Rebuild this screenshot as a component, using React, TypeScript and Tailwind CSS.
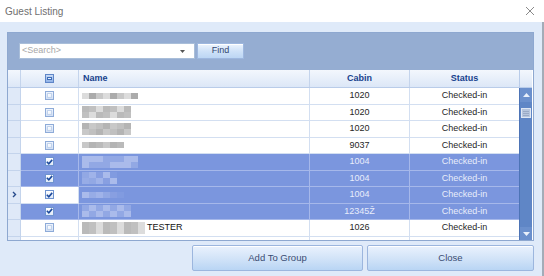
import React from "react";

function cn(...parts: Array<string | false | null | undefined>) {
  return parts.filter(Boolean).join(" ");
}

const GRAY = ["bg-[#d2d2d2]", "bg-[#c0c0c0]", "bg-[#b4b4b4]", "bg-[#dcdcdc]", "bg-[#ababab]", "bg-[#c8c8c8]", "bg-[#bababa]"];
const BLUE = ["bg-[#92a8e4]", "bg-[#a0b3e9]", "bg-[#889fe1]", "bg-[#aabbeb]", "bg-[#819be0]", "bg-[#97ace6]"];

type Row = {
  cabin: string;
  checked: boolean;
  selected: boolean;
  current?: boolean;
  cols: number;
  lines: number;
  seed: number;
  suffix?: string;
};

const rows: Row[] = [
  { cabin: "1020", checked: false, selected: false, cols: 8, lines: 1, seed: 1 },
  { cabin: "1020", checked: false, selected: false, cols: 7, lines: 2, seed: 2 },
  { cabin: "1020", checked: false, selected: false, cols: 7, lines: 2, seed: 3 },
  { cabin: "9037", checked: false, selected: false, cols: 6, lines: 1, seed: 4 },
  { cabin: "1004", checked: true, selected: true, cols: 8, lines: 2, seed: 5 },
  { cabin: "1004", checked: true, selected: true, cols: 5, lines: 2, seed: 6 },
  { cabin: "1004", checked: true, selected: true, current: true, cols: 6, lines: 1, seed: 7 },
  { cabin: "12345Ž", checked: true, selected: true, cols: 7, lines: 2, seed: 8 },
  { cabin: "1026", checked: false, selected: false, cols: 9, lines: 2, seed: 9, suffix: "TESTER" },
];

function Mosaic({ cols, lines, seed, blue }: { cols: number; lines: number; seed: number; blue: boolean }) {
  const pal = blue ? BLUE : GRAY;
  const cells: string[] = [];
  for (let i = 0; i < cols * lines; i++) {
    cells.push(pal[(i * 7 + seed * 3 + (i % 3) * seed) % pal.length]);
  }
  return (
    <div className="flex flex-col">
      {Array.from({ length: lines }).map((_, r) => (
        <div key={r} className="flex">
          {Array.from({ length: cols }).map((__, c) => (
            <div key={c} className={cn("w-[7px] h-[6px]", cells[r * cols + c])} />
          ))}
        </div>
      ))}
    </div>
  );
}

function CheckBox({ checked, header }: { checked?: boolean; header?: boolean }) {
  if (header) {
    return (
      <div className="w-[9px] h-[9px] border border-[#5f86c8] bg-gradient-to-b from-[#c9dbf6] to-[#8fb1e6] flex items-center justify-center">
        <div className="w-[5px] h-[3px] border border-[#3d6cb8] bg-[#e8f0fc]" />
      </div>
    );
  }
  if (checked) {
    return (
      <div className="w-[9px] h-[9px] border border-[#6f93cf] bg-gradient-to-b from-[#ffffff] to-[#dfe9f8] flex items-center justify-center">
        <svg width="7" height="6" viewBox="0 0 7 6">
          <path d="M0.8 2.8 L2.8 4.8 L6.2 0.9" fill="none" stroke="#1d4a9c" strokeWidth="1.6" />
        </svg>
      </div>
    );
  }
  return (
    <div className="w-[9px] h-[9px] border border-[#8eabd8] bg-gradient-to-b from-[#eef4fd] to-[#d3e0f4] flex items-center justify-center">
      <div className="w-[5px] h-[5px] bg-gradient-to-br from-[#ffffff] to-[#e6eef9] border border-[#c2d3ec]" />
    </div>
  );
}

function GridRow({ r }: { r: Row }) {
  const sel = r.selected;
  const line = sel ? "border-[#a6b8ea]" : "border-[#d3dff1]";
  const txt = sel ? "text-[#e8edfb]" : "text-[#262626]";
  return (
    <div className="flex h-[16.5px]">
      <div className="w-[13px] shrink-0 bg-[#dfe9f8] border-r border-b border-[#c4d4ec] flex items-center justify-center">
        {r.current ? (
          <svg width="5" height="7" viewBox="0 0 5 7">
            <path d="M1 1 L3.5 3.5 L1 6" fill="none" stroke="#274b8c" strokeWidth="1.4" />
          </svg>
        ) : null}
      </div>
      <div
        className={cn(
          "w-[58px] shrink-0 border-r border-b flex items-center justify-center",
          sel && !r.current ? "bg-[#7b96de]" : "bg-white",
          sel && !r.current ? line : "border-[#d3dff1]"
        )}
      >
        <CheckBox checked={r.checked} />
      </div>
      <div className={cn("w-[231px] shrink-0 border-r border-b flex items-center pl-[3px] gap-[2px]", sel ? "bg-[#7b96de]" : "bg-white", line)}>
        <Mosaic cols={r.cols} lines={r.lines} seed={r.seed} blue={sel} />
        {r.suffix ? <span className="text-[9px] text-[#111]">{r.suffix}</span> : null}
      </div>
      <div className={cn("w-[100px] shrink-0 border-r border-b flex items-center justify-center text-[9px]", sel ? "bg-[#7b96de]" : "bg-white", line, txt)}>
        {r.cabin}
      </div>
      <div className={cn("w-[109px] shrink-0 border-b flex items-center justify-center text-[9px]", sel ? "bg-[#7b96de]" : "bg-white", line, txt)}>
        Checked-in
      </div>
    </div>
  );
}

export default function App() {
  return (
    <div
      className="w-[544px] h-[276px] bg-white flex flex-col overflow-hidden"
      style={{ fontFamily: '"Liberation Sans", Arial, sans-serif' }}
    >
      {/* Title bar */}
      <div className="h-[22px] shrink-0 flex items-center justify-between pl-[5px] pr-[9px]">
        <span className="text-[10px] text-[#6f6f6f]">Guest Listing</span>
        <svg width="10" height="10" viewBox="0 0 10 10">
          <path d="M1 1 L9 9 M9 1 L1 9" stroke="#8a8a8a" strokeWidth="1" />
        </svg>
      </div>

      {/* Body */}
      <div className="flex-1 bg-[#dfeaf9] border-r-2 border-[#a3acb8] pl-[7px] pr-[8px] pt-[10px] flex flex-col">
        {/* Panel */}
        <div className="h-[209px] border border-[#8ea8d0] flex flex-col">
          {/* Toolbar */}
          <div className="h-[37px] shrink-0 bg-[#95add2] flex items-start pl-[11px] pt-[10px] gap-[2px]">
            <div className="w-[176px] h-[16px] bg-white border border-[#a9bed9] flex items-center justify-between pl-[2px] pr-[9px]">
              <span className="text-[9px] text-[#a7a7a7]">&lt;Search&gt;</span>
              <svg width="5" height="3" viewBox="0 0 5 3">
                <path d="M0 0 L5 0 L2.5 3 Z" fill="#555" />
              </svg>
            </div>
            <div className="w-[47px] h-[16px] border border-[#9db7df] bg-gradient-to-b from-[#eef5fe] via-[#cfe2f8] to-[#bcd6f4] flex items-center justify-center shadow-[inset_0_1px_0_#ffffff]">
              <span className="text-[9px] text-[#34476e]">Find</span>
            </div>
          </div>

          {/* Grid */}
          <div className="flex-1 flex bg-white overflow-hidden">
            <div className="w-[511px] shrink-0 flex flex-col">
              {/* Header */}
              <div className="flex h-[18px] shrink-0 bg-gradient-to-b from-[#f3f7fd] to-[#dce7f7] border-b border-[#b9cce9] text-[9px] font-bold text-[#17418d]">
                <div className="w-[13px] shrink-0 border-r border-[#c4d4ec]" />
                <div className="w-[58px] shrink-0 border-r border-[#c4d4ec] flex items-center justify-center">
                  <CheckBox header />
                </div>
                <div className="w-[231px] shrink-0 border-r border-[#c4d4ec] flex items-center pl-[4px]">Name</div>
                <div className="w-[100px] shrink-0 border-r border-[#c4d4ec] flex items-center justify-center">Cabin</div>
                <div className="w-[109px] shrink-0 flex items-center justify-center">Status</div>
              </div>
              {rows.map((r, i) => (
                <GridRow key={i} r={r} />
              ))}
              <div className="flex flex-1">
                <div className="w-[13px] shrink-0 bg-[#dfe9f8] border-r border-[#c4d4ec]" />
                <div className="w-[58px] shrink-0 border-r border-[#d3dff1]" />
                <div className="w-[231px] shrink-0 border-r border-[#d3dff1]" />
                <div className="w-[100px] shrink-0 border-r border-[#d3dff1]" />
                <div className="w-[109px] shrink-0" />
              </div>
            </div>

            {/* Scrollbar */}
            <div className="w-[13px] shrink-0 flex flex-col">
              <div className="h-[18px] shrink-0 bg-gradient-to-b from-[#f3f7fd] to-[#dce7f7] border-b border-l border-[#b9cce9]" />
              <div className="flex-1 bg-[#5f86c6] border-l border-[#4d74b6] flex flex-col items-center">
                <div className="h-[14px] w-full flex items-center justify-center bg-[#6b90cd]">
                  <svg width="7" height="4" viewBox="0 0 7 4">
                    <path d="M0 4 L3.5 0 L7 4 Z" fill="#e9f0fb" />
                  </svg>
                </div>
                <div className="mt-[6px] w-[10px] h-[10px] border border-[#dfe7f4] bg-[#b7c6de] flex flex-col justify-center items-center gap-[1px]">
                  <div className="w-[6px] h-px bg-[#9aaac6]" />
                  <div className="w-[6px] h-px bg-[#9aaac6]" />
                  <div className="w-[6px] h-px bg-[#9aaac6]" />
                </div>
                <div className="flex-1" />
                <div className="h-[13px] w-full flex items-center justify-center bg-[#6b90cd]">
                  <svg width="7" height="4" viewBox="0 0 7 4">
                    <path d="M0 0 L7 0 L3.5 4 Z" fill="#e9f0fb" />
                  </svg>
                </div>
              </div>
            </div>
          </div>
        </div>

        {/* Buttons */}
        <div className="mt-[4px] flex justify-end gap-[4px]">
          <div className="w-[171px] h-[26px] rounded-[2px] border border-[#9cb6de] bg-gradient-to-b from-[#eaf2fd] via-[#d3e4f8] to-[#b9d5f4] shadow-[inset_0_1px_0_#ffffff] flex items-center justify-center">
            <span className="text-[9.5px] text-[#3a4c72]">Add To Group</span>
          </div>
          <div className="w-[167px] h-[26px] rounded-[2px] border border-[#9cb6de] bg-gradient-to-b from-[#eaf2fd] via-[#d3e4f8] to-[#b9d5f4] shadow-[inset_0_1px_0_#ffffff] flex items-center justify-center">
            <span className="text-[9.5px] text-[#3a4c72]">Close</span>
          </div>
        </div>
      </div>
    </div>
  );
}
